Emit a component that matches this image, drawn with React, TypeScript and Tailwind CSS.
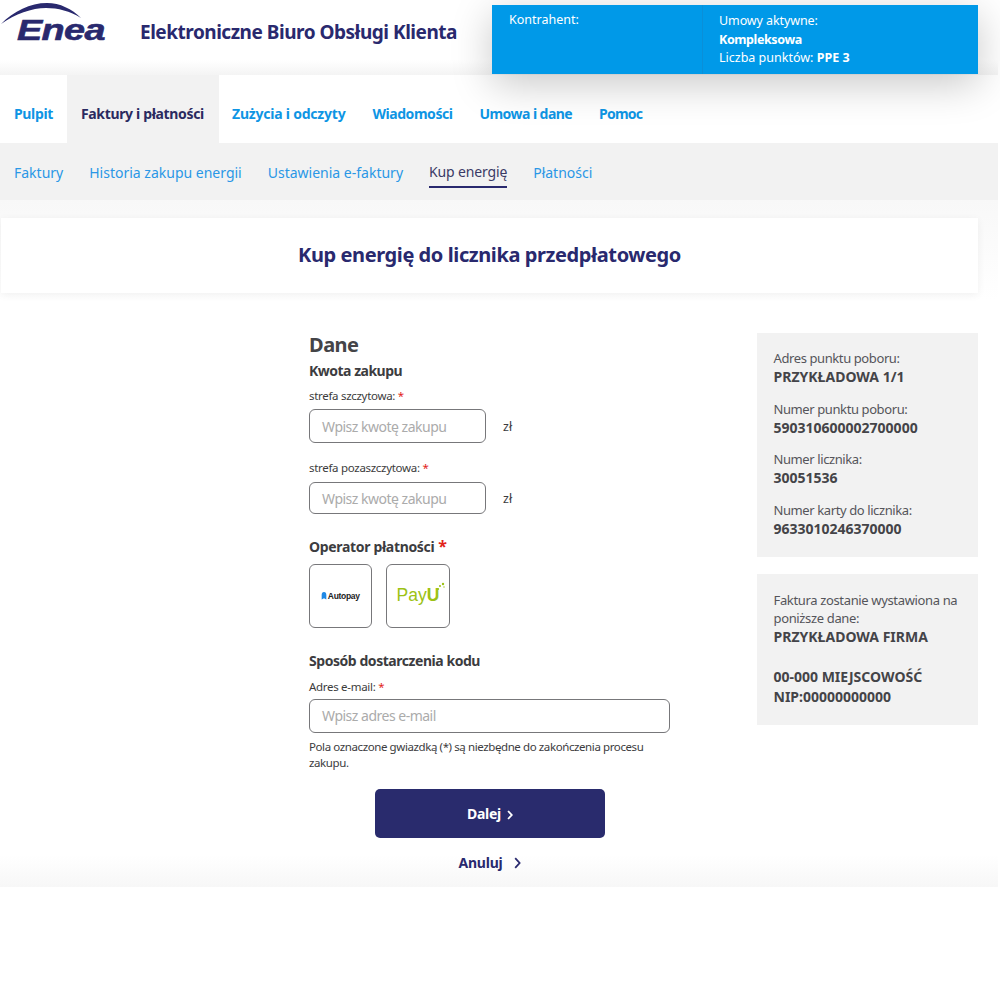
import React from "react";

const font = { fontFamily: '"Noto Sans", sans-serif' };

function Logo() {
  return (
    <div className="relative w-[120px] h-[50px] shrink-0">
      <svg className="absolute left-0 top-0" width="120" height="50" viewBox="0 0 120 50">
        <path d="M1 24 C14 11 30 3 47 3 C60 3 72 9 81 18 C70 11 58 8 46 8 C32 8 15 14 1 24 Z" fill="#29296e" />
      </svg>
      <span className="absolute left-[17px] top-[13px] origin-left scale-x-[1.26] text-[30px] leading-[34px] font-bold italic tracking-[-0.5px] text-[#29296e] [-webkit-text-stroke:0.6px_#29296e] [font-family:'Liberation_Sans',sans-serif]">
        Enea
      </span>
    </div>
  );
}

function Star({ big }: { big?: boolean }) {
  return <span className={big ? "text-[#e2231a] text-[16px]" : "text-[#e2231a]"}> *</span>;
}

function Label({ children }: { children: React.ReactNode }) {
  return <div className="text-[11.5px] leading-[16px] text-[#3c3c3c] tracking-[-0.3px]">{children}<Star /></div>;
}

function Field({ placeholder, h, wide }: { placeholder: string; h: string; wide?: boolean }) {
  return (
    <div className={`${h} ${wide ? "w-[361px] pb-[1px]" : "w-[177px]"} border border-[#77777a] rounded-[6px] bg-white flex items-center pl-[12px] text-[14px] text-[#ababab] tracking-[-0.5px]`}>
      {placeholder}
    </div>
  );
}

function Info({ label, value }: { label: string; value: string }) {
  return (
    <div className="mb-[12.7px]">
      <div className="text-[13px] leading-[18px] text-[#55555a] tracking-[-0.4px]">{label}</div>
      <div className="text-[14px] leading-[20px] font-bold text-[#444448]">{value}</div>
    </div>
  );
}

function Chevron({ stroke, cls, small }: { stroke: string; cls: string; small?: boolean }) {
  return (
    <svg className={cls} width={small ? 6 : 7} height={small ? 10 : 12} viewBox="0 0 7 12" fill="none">
      <path d="M1.2 1.2 L5.6 6 L1.2 10.8" stroke={stroke} strokeWidth={small ? 2.2 : 1.8} />
    </svg>
  );
}

export default function App() {
  return (
    <div style={font} className="w-[998px] min-h-[1000px] bg-white">
      <header className="relative z-10 h-[75px] flex bg-gradient-to-b from-white from-[80%] to-[#f4f4f4]">
        <Logo />
        <h1 className="ml-[20px] mt-[19px] text-[19px] leading-[26px] font-bold text-[#29296e] tracking-[-0.48px] whitespace-nowrap">
          Elektroniczne Biuro Obsługi Klienta
        </h1>
        <div className="absolute left-[492px] top-[5px] w-[486px] h-[69px] bg-[#0099e8] flex text-white text-[12.5px] leading-[18px] shadow-[0_10px_40px_rgba(0,0,0,0.22)]">
          <div className="w-[211px] h-full border-r border-[#0a8fd8] pl-[17px] pt-[6px]">Kontrahent:</div>
          <div className="pl-[16px] pt-[6px]">
            <div className="leading-[19px] tracking-[-0.1px]">Umowy aktywne:</div>
            <div className="font-bold leading-[19px] tracking-[-0.4px]">Kompleksowa</div>
            <div className="leading-[18px]">Liczba punktów: <b>PPE 3</b></div>
          </div>
        </div>
      </header>

      <nav className="h-[68px] flex items-center bg-white text-[14px] font-bold text-[#0e95e4] tracking-[-0.35px] whitespace-nowrap">
        <a className="w-[67px] h-full flex items-center pl-[14px] pt-[8px]">Pulpit</a>
        <a className="w-[152px] h-full flex items-center pl-[14px] pt-[8px] bg-[#f2f2f2] text-[#2a2a60]">Faktury i płatności</a>
        <a className="ml-[13px] pt-[8px] tracking-[-0.22px]">Zużycia i odczyty</a>
        <a className="ml-[27px] pt-[8px] tracking-[-0.45px]">Wiadomości</a>
        <a className="ml-[27px] pt-[8px] tracking-[-0.55px]">Umowa i dane</a>
        <a className="ml-[27px] pt-[8px] tracking-[-0.8px]">Pomoc</a>
      </nav>

      <nav className="h-[57px] bg-[#f2f2f2] flex items-center pl-[14px] gap-[26px] text-[14px] text-[#2a97e6] whitespace-nowrap">
        <a className="pt-[2px]">Faktury</a>
        <a className="pt-[2px]">Historia zakupu energii</a>
        <a className="pt-[2px]">Ustawienia e-faktury</a>
        <a className="text-[#3a3a66] h-[30px] mt-[2px] flex items-center border-b-2 border-[#29296e] tracking-[-0.15px]">Kup energię</a>
        <a className="pt-[2px]">Płatności</a>
      </nav>

      <main className="h-[687px] pt-[18px] bg-[linear-gradient(to_bottom,#f8f8f8_0,#ffffff_100px,#ffffff_655px,#f7f7f7_100%)]">
        <div className="ml-[1px] w-[977px] h-[75px] pb-[2px] bg-white shadow-[0_2px_8px_rgba(0,0,0,0.06)] flex items-center justify-center text-[20px] font-bold text-[#29296e] tracking-[-0.4px]">
          Kup energię do licznika przedpłatowego
        </div>

        <div className="flex pl-[309px] pt-[40px]">
          <form className="w-[361px] text-[#3c3c40]">
            <h2 className="text-[20px] leading-[24px] font-bold text-[#444448] tracking-[-0.5px]">Dane</h2>
            <h3 className="mt-[4px] text-[14px] leading-[20px] font-bold tracking-[-0.5px]">Kwota zakupu</h3>
            <div className="mt-[7px]"><Label>strefa szczytowa:</Label></div>
            <div className="mt-[5px] flex items-center">
              <Field placeholder="Wpisz kwotę zakupu" h="h-[34px]" />
              <span className="ml-[17px] mt-[2px] text-[12.5px]">zł</span>
            </div>
            <div className="mt-[17px]"><Label>strefa pozaszczytowa:</Label></div>
            <div className="mt-[6px] flex items-center">
              <Field placeholder="Wpisz kwotę zakupu" h="h-[32px]" />
              <span className="ml-[17px] mt-[2px] text-[12.5px]">zł</span>
            </div>
            <h3 className="mt-[22px] text-[14px] leading-[20px] font-bold tracking-[-0.33px]">Operator płatności<Star big /></h3>
            <div className="mt-[7px] flex gap-[14px]">
              <div className="w-[63px] h-[64px] border border-[#77777a] rounded-[6px] flex items-center justify-center">
                <svg width="6" height="8" viewBox="0 0 9 9" preserveAspectRatio="none" className="mr-[0.5px]"><path d="M1 8.5 V3.5 A3.2 3.2 0 0 1 8 3.5 V8.5 L4.5 7 Z" fill="#1e88e5" /></svg>
                <span className="text-[8.5px] font-bold text-[#222] tracking-[-0.3px] [font-family:'Liberation_Sans',sans-serif]">Autopay</span>
              </div>
              <div className="w-[64px] h-[64px] border border-[#77777a] rounded-[6px] flex items-center justify-center">
                <div className="relative flex items-baseline text-[17.5px] leading-none text-[#9cc215] [font-family:'Liberation_Sans',sans-serif]">
                  <span>Pay</span><b>U</b>
                  <svg className="absolute -right-[6px] -top-[5px]" width="9" height="9" viewBox="0 0 9 9" fill="#9cc215">
                    <circle cx="2" cy="7" r="1.1" /><circle cx="4" cy="4" r="1" /><circle cx="7" cy="2" r="1.2" /><circle cx="8" cy="5" r=".7" />
                  </svg>
                </div>
              </div>
            </div>
            <h3 className="mt-[23px] text-[14px] leading-[20px] font-bold tracking-[-0.45px]">Sposób dostarczenia kodu</h3>
            <div className="mt-[8px]"><Label>Adres e-mail:</Label></div>
            <div className="mt-[4px]"><Field placeholder="Wpisz adres e-mail" h="h-[34px]" wide /></div>
            <p className="mt-[6px] text-[11.5px] leading-[15.5px] text-[#3c3c40] tracking-[-0.4px] pr-[20px]">
              Pola oznaczone gwiazdką (*) są niezbędne do zakończenia procesu zakupu.
            </p>
            <button type="button" className="mt-[19px] ml-[66px] w-[230px] h-[49px] rounded-[5px] bg-[#292b6d] text-white text-[14px] font-bold tracking-[-0.3px] flex items-center justify-center">
              Dalej<Chevron stroke="#ffffff" cls="ml-[6px] mt-[2px]" small />
            </button>
            <div className="mt-[15px] flex items-center justify-center text-[14px] leading-[20px] font-bold text-[#29296e] tracking-[-0.2px]">
              Anuluj<Chevron stroke="#29296e" cls="ml-[11px]" />
            </div>
          </form>

          <aside className="ml-[87px] w-[221px]">
            <div className="h-[224px] bg-[#f2f2f2] pl-[16.5px] pt-[16px]">
              <Info label="Adres punktu poboru:" value="PRZYKŁADOWA 1/1" />
              <Info label="Numer punktu poboru:" value="590310600002700000" />
              <Info label="Numer licznika:" value="30051536" />
              <Info label="Numer karty do licznika:" value="9633010246370000" />
            </div>
            <div className="mt-[17px] h-[151px] bg-[#f2f2f2] pl-[16.5px] pt-[17px]">
              <div className="text-[13px] leading-[18px] text-[#55555a] tracking-[-0.35px]">Faktura zostanie wystawiona na<br />poniższe dane:</div>
              <div className="text-[14px] leading-[20px] font-bold text-[#444448]">PRZYKŁADOWA FIRMA<br /><br />00-000 MIEJSCOWOŚĆ<br />NIP:00000000000</div>
            </div>
          </aside>
        </div>
      </main>
    </div>
  );
}
